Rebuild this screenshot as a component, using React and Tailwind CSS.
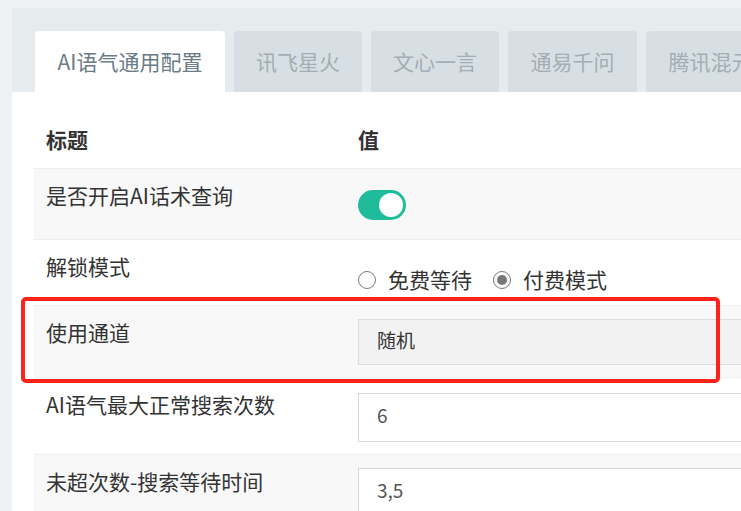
import React from "react";

const font = { fontFamily: '"Noto Sans CJK SC", "Noto Sans", sans-serif' };

function Tab({ label, active, w }) {
  return (
    <div
      className={
        "h-[61px] shrink-0 rounded-t-[4px] flex items-center justify-center text-[21px] " +
        (active ? "bg-white text-[#6b7b86]" : "bg-[#d8dfe4] text-[#a3adb3]") +
        " " + w
      }
    >
      {label}
    </div>
  );
}

function Radio({ checked, label }) {
  return (
    <div className="flex items-center">
      <span className="w-[18px] h-[18px] rounded-full border-[1.5px] border-[#7a7a7a] flex items-center justify-center bg-white">
        {checked && <span className="w-[10px] h-[10px] rounded-full bg-[#777777]" />}
      </span>
      <span className="ml-[12px] text-[21px] leading-[22px] text-[#333333] pb-[2px]">{label}</span>
    </div>
  );
}

function Row({ h, gray, label, children }) {
  return (
    <div className={"flex border-t border-[#eeeeee] " + h + " " + (gray ? "bg-[#f8f8f8]" : "bg-white")}>
      <div className="w-[324px] shrink-0 pl-[12px] pt-[15px] text-[21px] leading-[22px] text-[#333333]">{label}</div>
      <div className="flex-1">{children}</div>
    </div>
  );
}

export default function App() {
  return (
    <div className="relative w-[741px] h-[511px] overflow-hidden bg-[#eef2f5] pl-[12px] pt-[8px]" style={font}>
      <div className="w-[800px] bg-[#e6ebee] h-[84px] flex items-end gap-[9px] pl-[23px]">
        <Tab label="AI语气通用配置" active w="w-[190px]" />
        <Tab label="讯飞星火" w="w-[128px]" />
        <Tab label="文心一言" w="w-[128px]" />
        <Tab label="通易千问" w="w-[129px]" />
        <Tab label="腾讯混元" w="w-[129px]" />
      </div>
      <div className="w-[800px] bg-white pl-[22px] h-[500px]">
        <div className="flex h-[76px] pt-[20px] items-center font-bold text-[21px] text-[#333333]">
          <div className="w-[324px] pl-[12px]">标题</div>
          <div>值</div>
        </div>
        <Row h="h-[71px]" gray label="是否开启AI话术查询">
          <div className="pt-[21px]">
            <div className="w-[48px] h-[30px] rounded-full bg-[#1fbc9b] flex items-center justify-end pr-[3px]">
              <span className="w-[24px] h-[24px] rounded-full bg-white" />
            </div>
          </div>
        </Row>
        <Row h="h-[66px]" label="解锁模式">
          <div className="pt-[28px] flex gap-[21px]">
            <Radio label="免费等待" />
            <Radio checked label="付费模式" />
          </div>
        </Row>
        <Row h="h-[72px]" gray label="使用通道">
          <div className="pt-[13px]">
            <div className="h-[46px] bg-[#f2f2f2] border border-[#dcdcdc] flex items-center pl-[18px] pb-[3px] text-[19px] text-[#333333]">
              随机
            </div>
          </div>
        </Row>
        <Row h="h-[77px]" label="AI语气最大正常搜索次数">
          <div className="pt-[15px]">
            <div className="h-[49px] bg-white border border-[#d5d8dc] flex items-center pl-[18px] pb-[5px] text-[19px] text-[#555555]">
              6
            </div>
          </div>
        </Row>
        <Row h="h-[80px]" gray label="未超次数-搜索等待时间">
          <div className="pt-[13px]">
            <div className="h-[49px] bg-white border border-[#d5d8dc] flex items-center pl-[18px] pb-[5px] text-[19px] text-[#555555]">
              3,5
            </div>
          </div>
        </Row>
      </div>
      <div className="absolute left-[21px] top-[297px] w-[699px] h-[86px] border-[4px] border-[#ff2219] rounded-[5px]" />
    </div>
  );
}
